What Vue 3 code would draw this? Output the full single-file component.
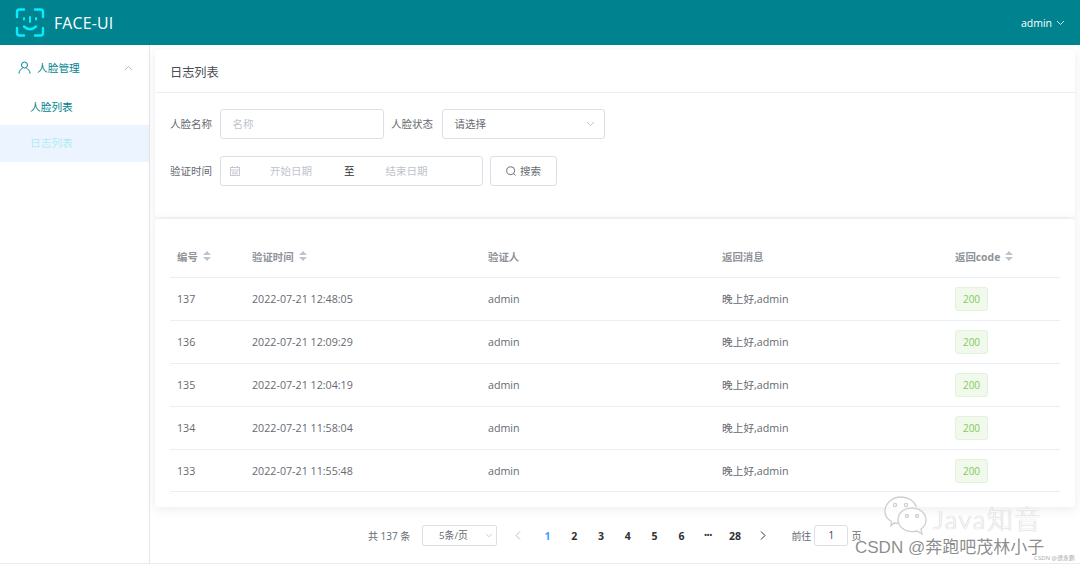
<script setup>
const rows = [
  ['137', '2022-07-21 12:48:05'],
  ['136', '2022-07-21 12:09:29'],
  ['135', '2022-07-21 12:04:19'],
  ['134', '2022-07-21 11:58:04'],
  ['133', '2022-07-21 11:55:48'],
]
const pages = ['1', '2', '3', '4', '5', '6', '•••', '28']
</script>

<template>
  <div class="app">
    <header class="top">
      <div class="brand">
        <svg class="logo" width="30" height="29" viewBox="0 0 30 29" fill="none" stroke="#00f0ff" stroke-width="2.4" stroke-linecap="round" stroke-linejoin="round">
          <path d="M2 9V4q0-2.500 2.500-2.500H9" />
          <path d="M20 1.500h5.500q2.500 0 2.500 2.500V9" />
          <path d="M2 20v5q0 2.500 2.500 2.500H9" />
          <path d="M20 27.500h5.500q2.500 0 2.500-2.500v-5" />
          <path d="M9 10v1.500M21 10v1.500M15 9v5" stroke-width="2" />
          <path d="M9 18.500q6 5.500 12 0" />
        </svg>
        <span class="brand-name">FACE-UI</span>
      </div>
      <div class="user">
        <span>admin</span>
        <svg width="9" height="6" viewBox="0 0 9 6" fill="none" stroke="#d5f0f2" stroke-width="1"><path d="M1 1l3.500 3.500L8 1" /></svg>
      </div>
    </header>

    <div class="body">
      <aside class="side">
        <div class="group">
          <svg width="13" height="13" viewBox="0 0 13 13" fill="none" stroke="#00838f" stroke-width="1"><circle cx="6.500" cy="4" r="3" /><path d="M1 12.500c0-3 2-4.500 3.500-5M12 12.500c0-3-2-4.500-3.500-5" /></svg>
          <span>人脸管理</span>
          <svg class="caret" width="9" height="6" viewBox="0 0 9 6" fill="none" stroke="#b5bcc4" stroke-width="1"><path d="M1 5l3.500-3.500L8 5" /></svg>
        </div>
        <div class="item">人脸列表</div>
        <div class="item active">日志列表</div>
      </aside>

      <main class="main">
        <section class="card filter">
          <div class="title">日志列表</div>
          <div class="form">
            <div class="line first">
              <label class="lbl">人脸名称</label>
              <div class="box name"><span class="ph">名称</span></div>
              <label class="lbl second">人脸状态</label>
              <div class="box state">
                <span>请选择</span>
                <svg width="9" height="6" viewBox="0 0 9 6" fill="none" stroke="#c0c4cc" stroke-width="1"><path d="M1 1l3.500 3.500L8 1" /></svg>
              </div>
            </div>
            <div class="line">
              <label class="lbl">验证时间</label>
              <div class="box range">
                <svg width="10" height="10" viewBox="0 0 10 10" fill="none" stroke="#c0c4cc" stroke-width="0.900"><rect x="0.500" y="1.500" width="9" height="8" /><path d="M0.500 4h9M2.500 0v2M7.500 0v2M2 6h6M2 7.800h6" /></svg>
                <span class="ph start">开始日期</span>
                <span class="to">至</span>
                <span class="ph end">结束日期</span>
              </div>
              <div class="btn">
                <svg width="10" height="10" viewBox="0 0 10 10" fill="none" stroke="#606266" stroke-width="0.900"><circle cx="4.700" cy="4.700" r="4" /><path d="M7.600 7.600L9.500 9.500" /></svg>
                <span>搜索</span>
              </div>
            </div>
          </div>
        </section>

        <section class="card list">
          <div class="grid head">
            <div class="cell">编号<i class="sort"></i></div>
            <div class="cell">验证时间<i class="sort"></i></div>
            <div class="cell">验证人</div>
            <div class="cell">返回消息</div>
            <div class="cell">返回code<i class="sort"></i></div>
          </div>
          <div v-for="r in rows" :key="r[0]" class="grid row">
            <div class="cell">{{ r[0] }}</div>
            <div class="cell">{{ r[1] }}</div>
            <div class="cell">admin</div>
            <div class="cell">晚上好,admin</div>
            <div class="cell"><span class="tag">200</span></div>
          </div>
        </section>

        <nav class="pager">
          <span class="total">共 137 条</span>
          <div class="size">
            <span>5条/页</span>
            <svg width="8" height="5" viewBox="0 0 9 6" fill="none" stroke="#c0c4cc" stroke-width="1"><path d="M1 1l3.500 3.500L8 1" /></svg>
          </div>
          <svg class="prev" width="6" height="9" viewBox="0 0 6 9" fill="none" stroke="#b8bcc4" stroke-width="1"><path d="M5 .5l-4 4 4 4" /></svg>
          <div class="pages">
            <span v-for="(p, i) in pages" :key="p" class="page" :class="{ on: i === 0, dots: p === '•••' }">{{ p }}</span>
          </div>
          <svg class="next" width="6" height="9" viewBox="0 0 6 9" fill="none" stroke="#303133" stroke-width="1"><path d="M1 .5l4 4-4 4" /></svg>
          <span class="goto">前往</span>
          <div class="jump">1</div>
          <span class="unit">页</span>
        </nav>
      </main>
    </div>

    <div class="mark">
      <svg class="wechat" width="44" height="42" viewBox="0 0 44 42" fill="none" stroke="#cfcfcf" stroke-width="1.300">
        <path d="M16 28c-2 .5-4 .5-6 0l-3 3 .5-4.500C3 24 1 20.500 1 16.500 1 8.500 8 2 17 2c7.500 0 13.500 4 15.500 10" fill="rgba(255,255,255,.7)" />
        <path d="M28 13c8 0 14 5.500 14 12 0 3.800-2 7-5 9l1 5-5-3c-1.500.4-3.200.6-5 .6-8 0-14-5.400-14-12S20 13 28 13z" fill="rgba(255,255,255,.8)" />
        <circle cx="11" cy="10" r="1.600" /><circle cx="22" cy="10" r="1.600" /><circle cx="23" cy="21" r="1.500" /><circle cx="33" cy="21" r="1.500" />
      </svg>
      <span class="java">Java知音</span>
      <span class="csdn">CSDN @奔跑吧茂林小子</span>
      <span class="tiny">CSDN @谭永鹏</span>
    </div>
  </div>
</template>

<style>
html, body { margin: 0; background: #fff; }
</style>

<style scoped>
.app {
  position: relative;
  width: 1080px;
  height: 564px;
  overflow: hidden;
  font-family: "Open Sans", "Noto Sans CJK SC", sans-serif;
  font-size: 10.700px;
  color: #666a70;
  background: #fff;
}
.top {
  height: 45px;
  background: #00838f;
  display: flex;
  align-items: center;
  justify-content: space-between;
  padding: 0 15px 0 15px;
}
.brand { display: flex; align-items: center; gap: 9px; }
.logo { display: block; }
.brand-name { color: #fff; font-size: 15.800px; letter-spacing: .2px; }
.user { display: flex; align-items: center; gap: 4px; color: #fff; font-size: 10.500px; margin-top: 1px; }
.body { display: flex; height: 519px; border-bottom: 1px solid #ececec; box-sizing: border-box; }
.side { width: 150px; flex: none; background: #fff; border-right: 1px solid #e6e6e6; box-sizing: border-box; padding-top: 1px; }
.group {
  height: 43px;
  display: flex;
  align-items: center;
  gap: 6px;
  padding: 0 16px 0 18px;
  color: #00838f;
}
.caret { margin-left: auto; }
.item { height: 37px; line-height: 37px; padding-left: 30px; color: #00838f; }
.item.active { background: #ecf5ff; color: #b2ebf2; margin-top: -1px; }
.main { flex: 1; padding: 5px 5px 0 5px; min-width: 0; }
.card { background: #fff; box-shadow: 0 2px 12px rgba(70, 80, 120, .11); border-radius: 3px; }
.filter { height: 167px; }
.title { height: 42px; line-height: 46px; padding-left: 15px; border-bottom: 1px solid #ebeef5; font-size: 12.200px; color: #4a4d52; }
.form { padding: 16px 15px 0; }
.line { display: flex; align-items: center; margin-bottom: 17px; line-height: 28px; }
.line.first { height: 30px; }
.lbl { width: 43px; margin-right: 7px; white-space: nowrap; font-size: 10.500px; }
.lbl.second { margin: 0 8px 0 7px; }
.box {
  height: 30px;
  box-sizing: border-box;
  border: 1px solid #dcdfe6;
  border-radius: 3px;
  display: flex;
  align-items: center;
  padding: 0 11.500px;
  font-size: 10.500px;
}
.name { width: 164px; }
.state { width: 163px; justify-content: space-between; padding-right: 9px; }
.ph { color: #c0c4cc; }
.range { width: 263px; padding-left: 9px; }
.start { margin-left: 30px; }
.to { margin-left: 32px; color: #303133; }
.end { margin-left: 31px; }
.btn {
  margin-left: 7px;
  width: 67px;
  height: 30px;
  box-sizing: border-box;
  border: 1px solid #dcdfe6;
  border-radius: 3px;
  display: flex;
  align-items: center;
  justify-content: center;
  gap: 4px;
  font-size: 10.500px;
}
.list { margin-top: 2px; height: 288px; padding: 16px 15px 0; box-sizing: border-box; }
.grid {
  display: grid;
  grid-template-columns: 75px 236px 234px 233px 113px;
  border-bottom: 1px solid #ebeef5;
  box-sizing: border-box;
  align-items: center;
}
.head { height: 43px; font-weight: 700; color: #909399; font-size: 10.400px; }
.row { height: 43px; line-height: 40px; }
.row:last-child { height: 42px; }
.cell { padding-left: 7px; display: flex; align-items: center; white-space: nowrap; }
.sort { display: inline-flex; flex-direction: column; position: relative; width: 8px; height: 10px; margin-left: 5px; }
.sort::before, .sort::after {
  content: "";
  position: absolute;
  left: 0;
  border-left: 4px solid transparent;
  border-right: 4px solid transparent;
}
.sort::before { top: 0; border-bottom: 4px solid #c0c4cc; }
.sort::after { bottom: 0; border-top: 4px solid #c0c4cc; }
.tag {
  width: 33px;
  height: 24px;
  line-height: 22px;
  text-align: center;
  box-sizing: border-box;
  background: #f0f9eb;
  border: 1px solid #e1f3d8;
  border-radius: 3px;
  color: #7fcc5a;
  font-size: 10px;
}
.pager { display: flex; align-items: center; height: 21px; margin-top: 18px; padding-left: 213px; line-height: 20px; }
.total { width: 54px; font-size: 10px; }
.size {
  width: 75px;
  height: 21px;
  box-sizing: border-box;
  border: 1px solid #dcdfe6;
  border-radius: 2px;
  display: flex;
  align-items: center;
  justify-content: space-between;
  padding: 0 3px 0 16px;
  font-size: 9.800px;
}
.prev { margin-left: 18px; }
.pages { display: flex; margin-left: 13px; align-items: center; }
.page { width: 26.800px; text-align: center; font-weight: 700; color: #303133; font-size: 10.500px; }
.page.on { color: #409eff; }
.page.dots { font-size: 7px; line-height: 20px; padding-top: 1px; }
.next { margin-left: 12px; }
.goto { margin-left: 25px; font-size: 10px; }
.jump {
  margin-left: 3px;
  width: 34px;
  height: 21px;
  line-height: 19px;
  box-sizing: border-box;
  border: 1px solid #dcdfe6;
  border-radius: 3px;
  text-align: center;
  color: #4a4d52;
}
.unit { margin-left: 3px; font-size: 10px; }
.mark span { position: absolute; white-space: nowrap; }
.wechat { position: absolute; left: 884px; top: 495px; }
.java {
  left: 933px;
  top: 499px;
  font-family: "Lato", "Noto Sans CJK SC", sans-serif;
  font-size: 26px;
  font-weight: 300;
  letter-spacing: 1.500px;
  color: rgba(255, 255, 255, .95);
  text-shadow: 0 0 1px #a5a5a5;
}
.csdn {
  left: 855px;
  top: 533px;
  font-family: "Liberation Sans", "Noto Sans CJK SC", sans-serif;
  font-size: 17px;
  color: rgba(120, 120, 120, .85);
}
.tiny {
  right: 5px;
  bottom: 2px;
  font-size: 6px;
  color: #aaa;
}
</style>
